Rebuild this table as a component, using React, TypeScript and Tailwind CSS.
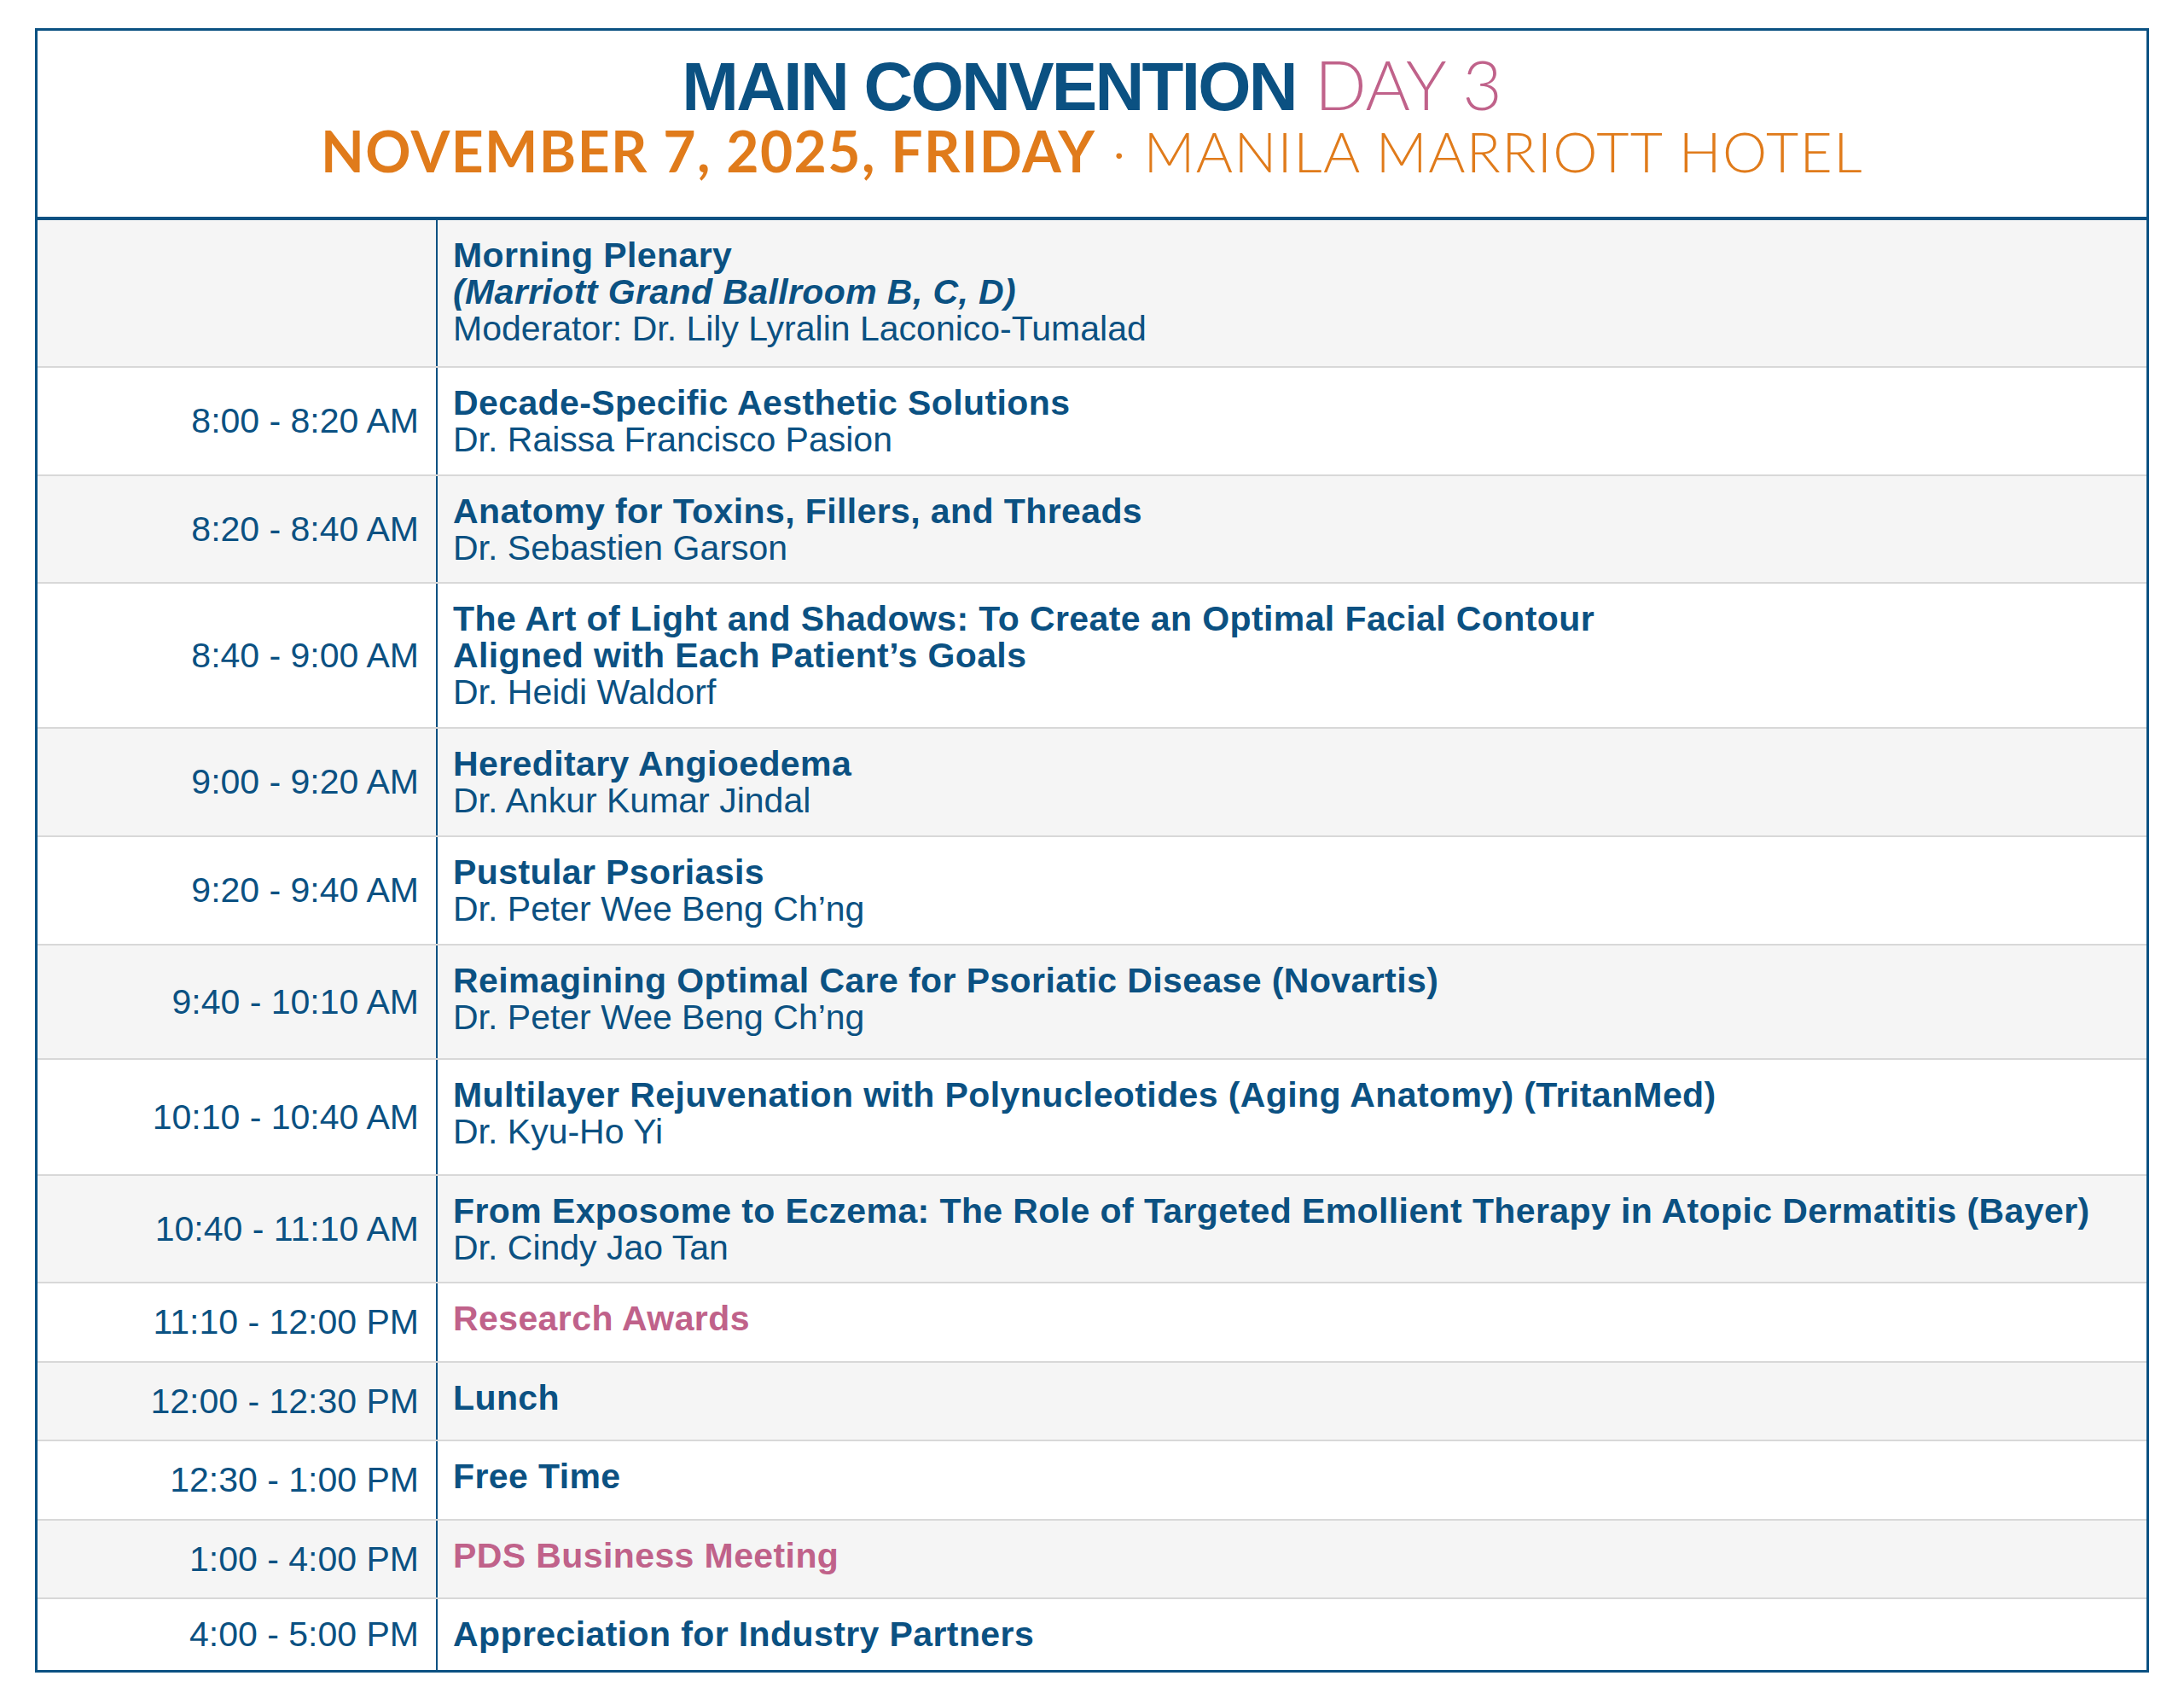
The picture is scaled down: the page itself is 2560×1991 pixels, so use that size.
const NAVY = 'text-[#0b5182]'

type Slot = {
  time: string
  title: string[]
  sub?: string
  speaker?: string
  pink?: boolean
  h: string
}

const SLOTS: Slot[] = [
  {
    time: '',
    title: ['Morning Plenary'],
    sub: '(Marriott Grand Ballroom B, C, D)',
    speaker: 'Moderator: Dr. Lily Lyralin Laconico-Tumalad',
    h: 'h-[173px]',
  },
  { time: '8:00 - 8:20 AM', title: ['Decade-Specific Aesthetic Solutions'], speaker: 'Dr. Raissa Francisco Pasion', h: 'h-[127px]' },
  { time: '8:20 - 8:40 AM', title: ['Anatomy for Toxins, Fillers, and Threads'], speaker: 'Dr. Sebastien Garson', h: 'h-[126px]' },
  {
    time: '8:40 - 9:00 AM',
    title: ['The Art of Light and Shadows: To Create an Optimal Facial Contour', 'Aligned with Each Patient’s Goals'],
    speaker: 'Dr. Heidi Waldorf',
    h: 'h-[170px]',
  },
  { time: '9:00 - 9:20 AM', title: ['Hereditary Angioedema'], speaker: 'Dr. Ankur Kumar Jindal', h: 'h-[127px]' },
  { time: '9:20 - 9:40 AM', title: ['Pustular Psoriasis'], speaker: 'Dr. Peter Wee Beng Ch’ng', h: 'h-[127px]' },
  {
    time: '9:40 - 10:10 AM',
    title: ['Reimagining Optimal Care for Psoriatic Disease (Novartis)'],
    speaker: 'Dr. Peter Wee Beng Ch’ng',
    h: 'h-[134px]',
  },
  {
    time: '10:10 - 10:40 AM',
    title: ['Multilayer Rejuvenation with Polynucleotides (Aging Anatomy) (TritanMed)'],
    speaker: 'Dr. Kyu-Ho Yi',
    h: 'h-[136px]',
  },
  {
    time: '10:40 - 11:10 AM',
    title: ['From Exposome to Eczema: The Role of Targeted Emollient Therapy in Atopic Dermatitis (Bayer)'],
    speaker: 'Dr. Cindy Jao Tan',
    h: 'h-[126px]',
  },
  { time: '11:10 - 12:00 PM', title: ['Research Awards'], pink: true, h: 'h-[93px]' },
  { time: '12:00 - 12:30 PM', title: ['Lunch'], h: 'h-[92px]' },
  { time: '12:30 - 1:00 PM', title: ['Free Time'], h: 'h-[93px]' },
  { time: '1:00 - 4:00 PM', title: ['PDS Business Meeting'], pink: true, h: 'h-[92px]' },
  { time: '4:00 - 5:00 PM', title: ['Appreciation for Industry Partners'], h: 'h-[83px]' },
]

function Row({ slot, index, last }: { slot: Slot; index: number; last: boolean }) {
  return (
    <div
      className={`flex ${slot.h} ${index % 2 === 0 ? 'bg-[#f5f5f5]' : 'bg-white'} ${
        last ? '' : 'border-b-2 border-[#d8d8d8]'
      }`}
    >
      <div className={`flex w-[469px] shrink-0 items-center justify-end border-r-2 border-[#0b5182] pr-[20px] ${NAVY}`}>
        {slot.time}
      </div>
      <div className="flex-1 pl-[18px] pt-[20px]">
        {slot.title.map((t) => (
          <div key={t} className={`font-bold tracking-[0.4px] ${slot.pink ? 'text-[#c0628a]' : NAVY}`}>
            {t}
          </div>
        ))}
        {slot.sub && <div className={`font-bold italic tracking-[0.4px] ${NAVY}`}>{slot.sub}</div>}
        {slot.speaker && <div className={NAVY}>{slot.speaker}</div>}
      </div>
    </div>
  )
}

export default function App() {
  return (
    <div className="h-[1991px] w-[2560px] bg-white pl-[41px] pt-[33px] font-['Liberation_Sans',Arial,sans-serif] text-[41px] leading-[43px]">
      <div className="w-[2478px] border-[3px] border-[#0b5182]">
        <div className="border-b-4 border-[#0b5182] pb-[44px] pt-[22px] text-center">
          <div className="text-[80px] leading-[80px]">
            <span className="font-bold tracking-[-2.7px] text-[#0b5182]">MAIN CONVENTION</span>{' '}
            <span className="font-['Lato',sans-serif] font-light text-[#c0628a]">DAY 3</span>
          </div>
          <div className="mt-[2px] font-['Lato',sans-serif] text-[66px] leading-[66px] tracking-[1.4px] text-[#e07b1b]">
            <span className="font-bold">NOVEMBER 7, 2025, FRIDAY</span>
            <span className="font-light"> · MANILA MARRIOTT HOTEL</span>
          </div>
        </div>
        {SLOTS.map((s, i) => (
          <Row key={i} slot={s} index={i} last={i === SLOTS.length - 1} />
        ))}
      </div>
    </div>
  )
}
